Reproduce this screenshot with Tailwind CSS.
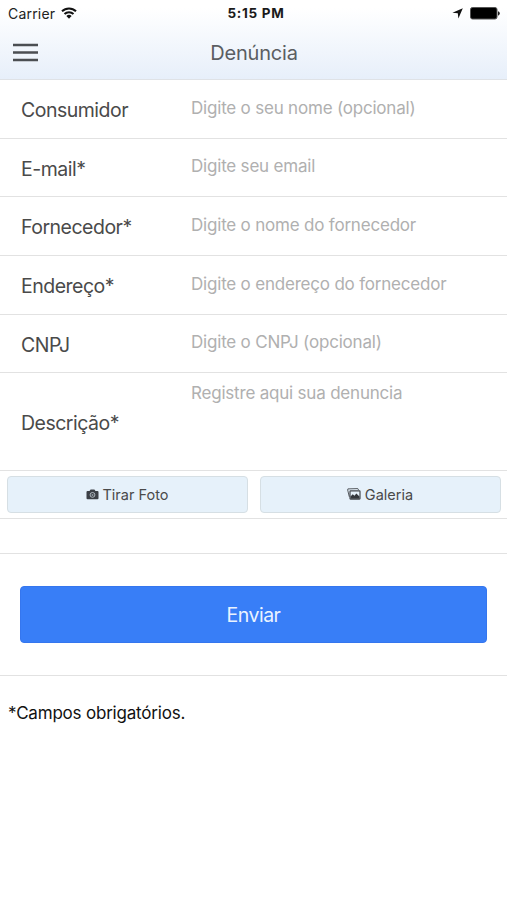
<!doctype html>
<html lang="pt-BR">
  <head>
    <meta charset="UTF-8" />
    <meta name="viewport" content="width=device-width, initial-scale=1.0" />
    <title>Denúncia</title>
    <script src="https://cdn.jsdelivr.net/npm/@tailwindcss/browser@4"></script>
  </head>
  <body class="bg-white font-['Inter',sans-serif]">
    <div class="flex flex-col min-h-screen">
      <header class="h-20 flex flex-col border-b border-[#dfe2e6] bg-linear-to-b from-white from-10% to-[#e7effa]">
        <!-- status bar -->
        <div class="h-[27px] shrink-0 grid grid-cols-3 items-center pl-2 pr-[7px] text-black">
          <div class="flex items-center gap-[6px]">
            <span class="text-[14px] tracking-[0.2px] text-[#222]">Carrier</span>
            <svg class="w-4 h-3 -mt-0.5" viewBox="0 0 16 12" fill="none" stroke="#111" stroke-width="2">
              <path d="M1 4.3a10 10 0 0 1 14 0M3.5 7a6.4 6.4 0 0 1 9 0" />
              <path d="M5.4 9a3.8 3.8 0 0 1 5.2 0L8 11.7z" fill="#111" stroke="none" />
            </svg>
          </div>
          <div class="text-center text-[13.5px] tracking-[0.7px] font-bold text-[#1a1a1a] whitespace-nowrap pl-1">5:15 PM</div>
          <div class="flex items-center justify-end gap-[7px]">
            <svg class="w-[11px] h-[11px]" viewBox="0 0 11 11" fill="#111"><path d="M10.8.2 6.4 10.4 5.8 5.3.4 4.7z" /></svg>
            <svg class="w-[30px] h-[13px]" viewBox="0 0 30 13">
              <rect x=".5" y=".5" width="26.5" height="11.5" rx="2" fill="#000" stroke="#555" />
              <path d="M28 4.3q1.8.6 1.8 2.2T28 8.7z" fill="#222" />
            </svg>
          </div>
        </div>
        <!-- title bar -->
        <div class="h-[51px] grid grid-cols-[1fr_auto_1fr] items-center px-[13px]">
          <button>
            <svg class="w-[25px] h-[19px]" viewBox="0 0 25 19" stroke="#4b4e52" stroke-width="2.6">
              <path d="M0 2h25M0 9.5h25M0 17h25" />
            </svg>
          </button>
          <h1 class="text-[20px] tracking-[-0.2px] text-[#5b5e62] pl-px">Denúncia</h1>
        </div>
      </header>

      <form class="flex flex-col text-[#4a4a4a]">
        <label class="h-[59px] flex items-center border-b border-[#e2e2e2] pl-[21px]">
          <span class="w-[170px] text-[19.5px] tracking-[-0.5px] pt-1">Consumidor</span>
          <input type="text" class="w-[300px] text-[17px] tracking-[-0.2px] placeholder:text-[#b0b0b0] pb-px outline-none" placeholder="Digite o seu nome (opcional)" />
        </label>
        <label class="h-[58px] flex items-center border-b border-[#e2e2e2] pl-[21px]">
          <span class="w-[170px] text-[19.5px] tracking-[-0.5px] pt-1">E-mail*</span>
          <input type="text" class="w-[300px] text-[17px] tracking-[-0.2px] placeholder:text-[#b0b0b0] pb-px outline-none" placeholder="Digite seu email" />
        </label>
        <label class="h-[59px] flex items-center border-b border-[#e2e2e2] pl-[21px]">
          <span class="w-[170px] text-[19.5px] tracking-[-0.5px] pt-1">Fornecedor*</span>
          <input type="text" class="w-[300px] text-[17px] tracking-[-0.2px] placeholder:text-[#b0b0b0] pb-px outline-none" placeholder="Digite o nome do fornecedor" />
        </label>
        <label class="h-[59px] flex items-center border-b border-[#e2e2e2] pl-[21px]">
          <span class="w-[170px] text-[19.5px] tracking-[-0.5px] pt-1">Endereço*</span>
          <input type="text" class="w-[300px] text-[17px] tracking-[-0.2px] placeholder:text-[#b0b0b0] pb-px outline-none" placeholder="Digite o endereço do fornecedor" />
        </label>
        <label class="h-[58px] flex items-center border-b border-[#e2e2e2] pl-[21px]">
          <span class="w-[170px] text-[19.5px] tracking-[-0.5px] pt-1">CNPJ</span>
          <input type="text" class="w-[300px] text-[17px] tracking-[-0.2px] placeholder:text-[#b0b0b0] pb-px outline-none" placeholder="Digite o CNPJ (opcional)" />
        </label>
        <label class="h-[98px] flex items-center border-b border-[#e2e2e2] pl-[21px]">
          <span class="w-[170px] text-[19.5px] tracking-[-0.5px] pt-1">Descrição*</span>
          <textarea class="w-[300px] h-full text-[17px] tracking-[-0.2px] placeholder:text-[#b0b0b0] pt-2 resize-none outline-none" placeholder="Registre aqui sua denuncia"></textarea>
        </label>

        <!-- foto / galeria -->
        <div class="h-12 grid grid-cols-2 gap-3 items-center border-b border-[#e2e2e2] pl-[7px] pr-[6px]">
          <button type="button" class="h-[37px] flex items-center justify-center gap-1 rounded border border-[#d6dfe4] bg-[#e6f1fa] text-[14.5px] pr-px">
            <svg class="w-[13px] h-[11px] -mt-px" viewBox="0 0 13 11">
              <path d="M1.5 2h2L4.6.5h3.8L9.5 2h2q1 0 1 1v6.2q0 1-1 1h-10q-1 0-1-1V3q0-1 1-1z" fill="#3c4046" />
              <circle cx="6.5" cy="5.9" r="2.4" fill="none" stroke="#c9d3db" stroke-width=".8" />
              <circle cx="6.5" cy="5.9" r="1" fill="#8e969d" />
            </svg>
            Tirar Foto
          </button>
          <button type="button" class="h-[37px] flex items-center justify-center gap-1 rounded border border-[#d6dfe4] bg-[#e6f1fa] text-[14.5px] pr-px">
            <svg class="w-[14px] h-3 -mt-px" viewBox="0 0 14 12" fill="none" stroke="#44484d">
              <path d="M2.3 8.8.7 2 .9.9 10.8.6l.8 1.5" stroke-width=".9" />
              <rect x="3" y="2.9" width="10" height="8.2" rx=".5" stroke-width="1.2" />
              <path d="M3.5 10.8V8.5l2.2-2.3 1.8 1.6 1.8-2.3 3.2 3v2.3z" fill="#34383d" stroke="none" />
            </svg>
            Galeria
          </button>
        </div>
        <div class="h-[35px] border-b border-[#e2e2e2]"></div>

        <div class="h-[122px] flex items-center border-b border-[#e2e2e2] px-5">
          <button type="button" class="w-full h-[57px] rounded border border-[#3576ee] bg-[#387ef7] text-[19.5px] tracking-[-0.5px] text-[#eaf3ff] pt-[3px]">Enviar</button>
        </div>
      </form>
      <p class="pl-2 pt-[25px] text-[17px] tracking-[-0.2px] text-[#111]">*Campos obrigatórios.</p>
    </div>
  </body>
</html>
